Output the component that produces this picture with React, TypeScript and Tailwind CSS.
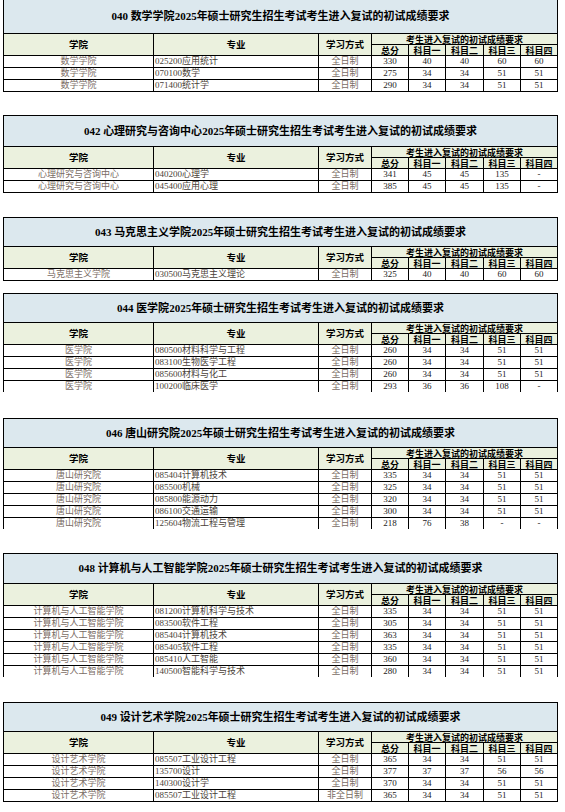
import React from 'react';

type Row = [string, string, string, string, string, string, string, string];

type Section = {
  code: string;
  name: string;
  mt: string;
  titleH: string;
  closed: boolean;
  rows: Row[];
};

const s = (major: string, total: string, a = '34', b = '34', c = '51', d = '51', mode = '全日制'): [string, string, string, string, string, string, string] => [
  major, mode, total, a, b, c, d,
];

const build = (college: string, list: ReturnType<typeof s>[]): Row[] => list.map((r) => [college, ...r] as Row);

const SECTIONS: Section[] = [
  {
    code: '040', name: '数学学院', mt: '-mt-px', titleH: 'h-[33px]', closed: true,
    rows: build('数学学院', [
      s('025200应用统计', '330', '40', '40', '60', '60'),
      s('070100数学', '275'),
      s('071400统计学', '290'),
    ]),
  },
  {
    code: '042', name: '心理研究与咨询中心', mt: 'mt-[23px]', titleH: 'h-[30px]', closed: true,
    rows: build('心理研究与咨询中心', [
      s('040200心理学', '341', '45', '45', '135', '-'),
      s('045400应用心理', '385', '45', '45', '135', '-'),
    ]),
  },
  {
    code: '043', name: '马克思主义学院', mt: 'mt-[24px]', titleH: 'h-[28px]', closed: true,
    rows: build('马克思主义学院', [s('030500马克思主义理论', '325', '40', '40', '60', '60')]),
  },
  {
    code: '044', name: '医学院', mt: 'mt-[12px]', titleH: 'h-[28px]', closed: false,
    rows: build('医学院', [
      s('080500材料科学与工程', '260'),
      s('083100生物医学工程', '260'),
      s('085600材料与化工', '260'),
      s('100200临床医学', '293', '36', '36', '108', '-'),
    ]),
  },
  {
    code: '046', name: '唐山研究院', mt: 'mt-[26px]', titleH: 'h-[28px]', closed: false,
    rows: build('唐山研究院', [
      s('085404计算机技术', '335'),
      s('085500机械', '325'),
      s('085800能源动力', '320'),
      s('086100交通运输', '300'),
      s('125604物流工程与管理', '218', '76', '38', '-', '-'),
    ]),
  },
  {
    code: '048', name: '计算机与人工智能学院', mt: 'mt-[24px]', titleH: 'h-[29px]', closed: false,
    rows: build('计算机与人工智能学院', [
      s('081200计算机科学与技术', '335'),
      s('083500软件工程', '305'),
      s('085404计算机技术', '363'),
      s('085405软件工程', '335'),
      s('085410人工智能', '360'),
      s('140500智能科学与技术', '280'),
    ]),
  },
  {
    code: '049', name: '设计艺术学院', mt: 'mt-[25px]', titleH: 'h-[28px]', closed: true,
    rows: build('设计艺术学院', [
      s('085507工业设计工程', '365'),
      s('135700设计', '377', '37', '37', '56', '56'),
      s('140300设计学', '370'),
      s('085507工业设计工程', '365', '34', '34', '51', '51', '非全日制'),
    ]),
  },
];

const SUBJECTS = ['总分', '科目一', '科目二', '科目三', '科目四'];

const FONT = "font-['Liberation_Serif','Noto_Sans_CJK_SC',serif]";
const HEAD = "bg-[#ebf1de] flex items-center justify-center overflow-hidden leading-none font-bold text-black font-['Noto_Sans_CJK_SC',sans-serif]";

function ScoreTable({ sec }: { sec: Section }) {
  return (
    <div className={`${sec.mt} ml-[3px] w-[555px] bg-black ${sec.closed ? 'p-px' : 'px-px pt-px'}`}>
      <div className="grid grid-cols-[149px_164px_52px_36px_36px_37px_36px_36px] gap-px">
        <div className={`col-span-8 ${sec.titleH} bg-[#dce8ee] flex items-center justify-center text-[11px] font-bold text-black leading-none ${FONT}`}>
          {sec.code} {sec.name}2025年硕士研究生招生考试考生进入复试的初试成绩要求
        </div>

        <div className={`row-span-2 text-[9.5px] ${HEAD}`}>学院</div>
        <div className={`row-span-2 text-[9.5px] ${HEAD}`}>专业</div>
        <div className={`row-span-2 text-[9.5px] ${HEAD}`}>学习方式</div>
        <div className={`col-span-5 h-[10px] text-[9px] ${HEAD}`}>考生进入复试的初试成绩要求</div>
        {SUBJECTS.map((t) => (
          <div key={t} className={`h-[10px] text-[9px] ${HEAD}`}>{t}</div>
        ))}

        {sec.rows.map((r, i) => (
          <React.Fragment key={i}>
            <div className={`h-[11px] bg-white flex items-center justify-center text-[9px] leading-none text-[#7a6c64] ${FONT}`}>{r[0]}</div>
            <div className={`h-[11px] bg-white flex items-center pl-px text-[9px] leading-none text-[#4a3f38] ${FONT}`}>{r[1]}</div>
            <div className={`h-[11px] bg-white flex items-center justify-center text-[9px] leading-none text-[#7a6c64] ${FONT}`}>{r[2]}</div>
            {r.slice(3).map((v, j) => (
              <div key={j} className={`h-[11px] bg-white flex items-center justify-center text-[9px] leading-none text-[#222] ${FONT}`}>{v}</div>
            ))}
          </React.Fragment>
        ))}
      </div>
    </div>
  );
}

export default function App() {
  return (
    <div className="w-[565px] h-[812px] overflow-hidden bg-white">
      {SECTIONS.map((sec) => (
        <ScoreTable key={sec.code} sec={sec} />
      ))}
    </div>
  );
}
